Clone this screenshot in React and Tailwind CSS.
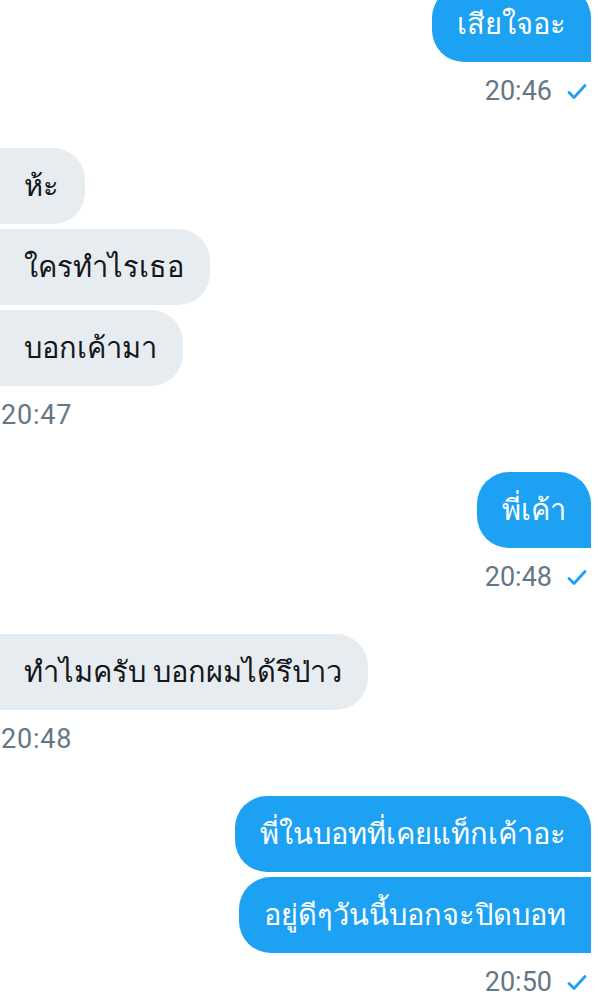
const messages = [
    { side: 'right', texts: ['เสียใจอะ'], time: '20:46', first: true },
    { side: 'left', texts: ['ห้ะ', 'ใครทำไรเธอ', 'บอกเค้ามา'], time: '20:47' },
    { side: 'right', texts: ['พี่เค้า'], time: '20:48' },
    { side: 'left', texts: ['ทำไมครับ บอกผมได้รึป่าว'], time: '20:48' },
    { side: 'right', texts: ['พี่ในบอทที่เคยแท็กเค้าอะ', 'อยู่ดีๆวันนี้บอกจะปิดบอท'], time: '20:50' },
];

function Check() {
    return (
        <svg width="20" height="17" viewBox="0 0 20 17" className="ml-[15px]">
            <path d="M2 9.5 L7 14.5 L18 2.5" fill="none" stroke="#1DA1F2" strokeWidth="2.8" strokeLinecap="round" strokeLinejoin="round" />
        </svg>
    );
}

function Group({ side, texts, time, first }) {
    const right = side === 'right';
    return (
        <div className={`flex flex-col ${right ? 'items-end pr-[7px]' : 'items-start'} ${first ? '-mt-[14px]' : 'mt-[39px]'}`}>
            <div className={`flex flex-col gap-[5px] ${right ? 'items-end' : 'items-start'}`}>
                {texts.map((t, i) => (
                    <div
                        key={i}
                        className={
                            right
                                ? `h-[76px] flex items-center px-[25px] bg-[#1DA1F2] text-white rounded-l-[32px] ${i === 0 ? 'rounded-tr-[32px]' : ''}`
                                : `h-[76px] flex items-center pl-[24px] pr-[26px] bg-[#E6ECF0] text-[#14171A] rounded-r-[32px]`
                        }
                    >
                        <span className="text-[29px] leading-none">{t}</span>
                    </div>
                ))}
            </div>
            <div className={`mt-[11px] h-[36px] flex items-center text-[#657786] text-[27px] ${right ? 'pr-[4px]' : 'pl-[1px] tracking-[0.8px]'}`}>
                <span>{time}</span>
                {right && <Check />}
            </div>
        </div>
    );
}

export default function App() {
    return (
        <div
            className="w-[598px] h-[1003px] overflow-hidden bg-white"
            style={{ fontFamily: 'Roboto, "Noto Sans", sans-serif' }}
        >
            {messages.map((m, i) => (
                <Group key={i} {...m} />
            ))}
        </div>
    );
}
